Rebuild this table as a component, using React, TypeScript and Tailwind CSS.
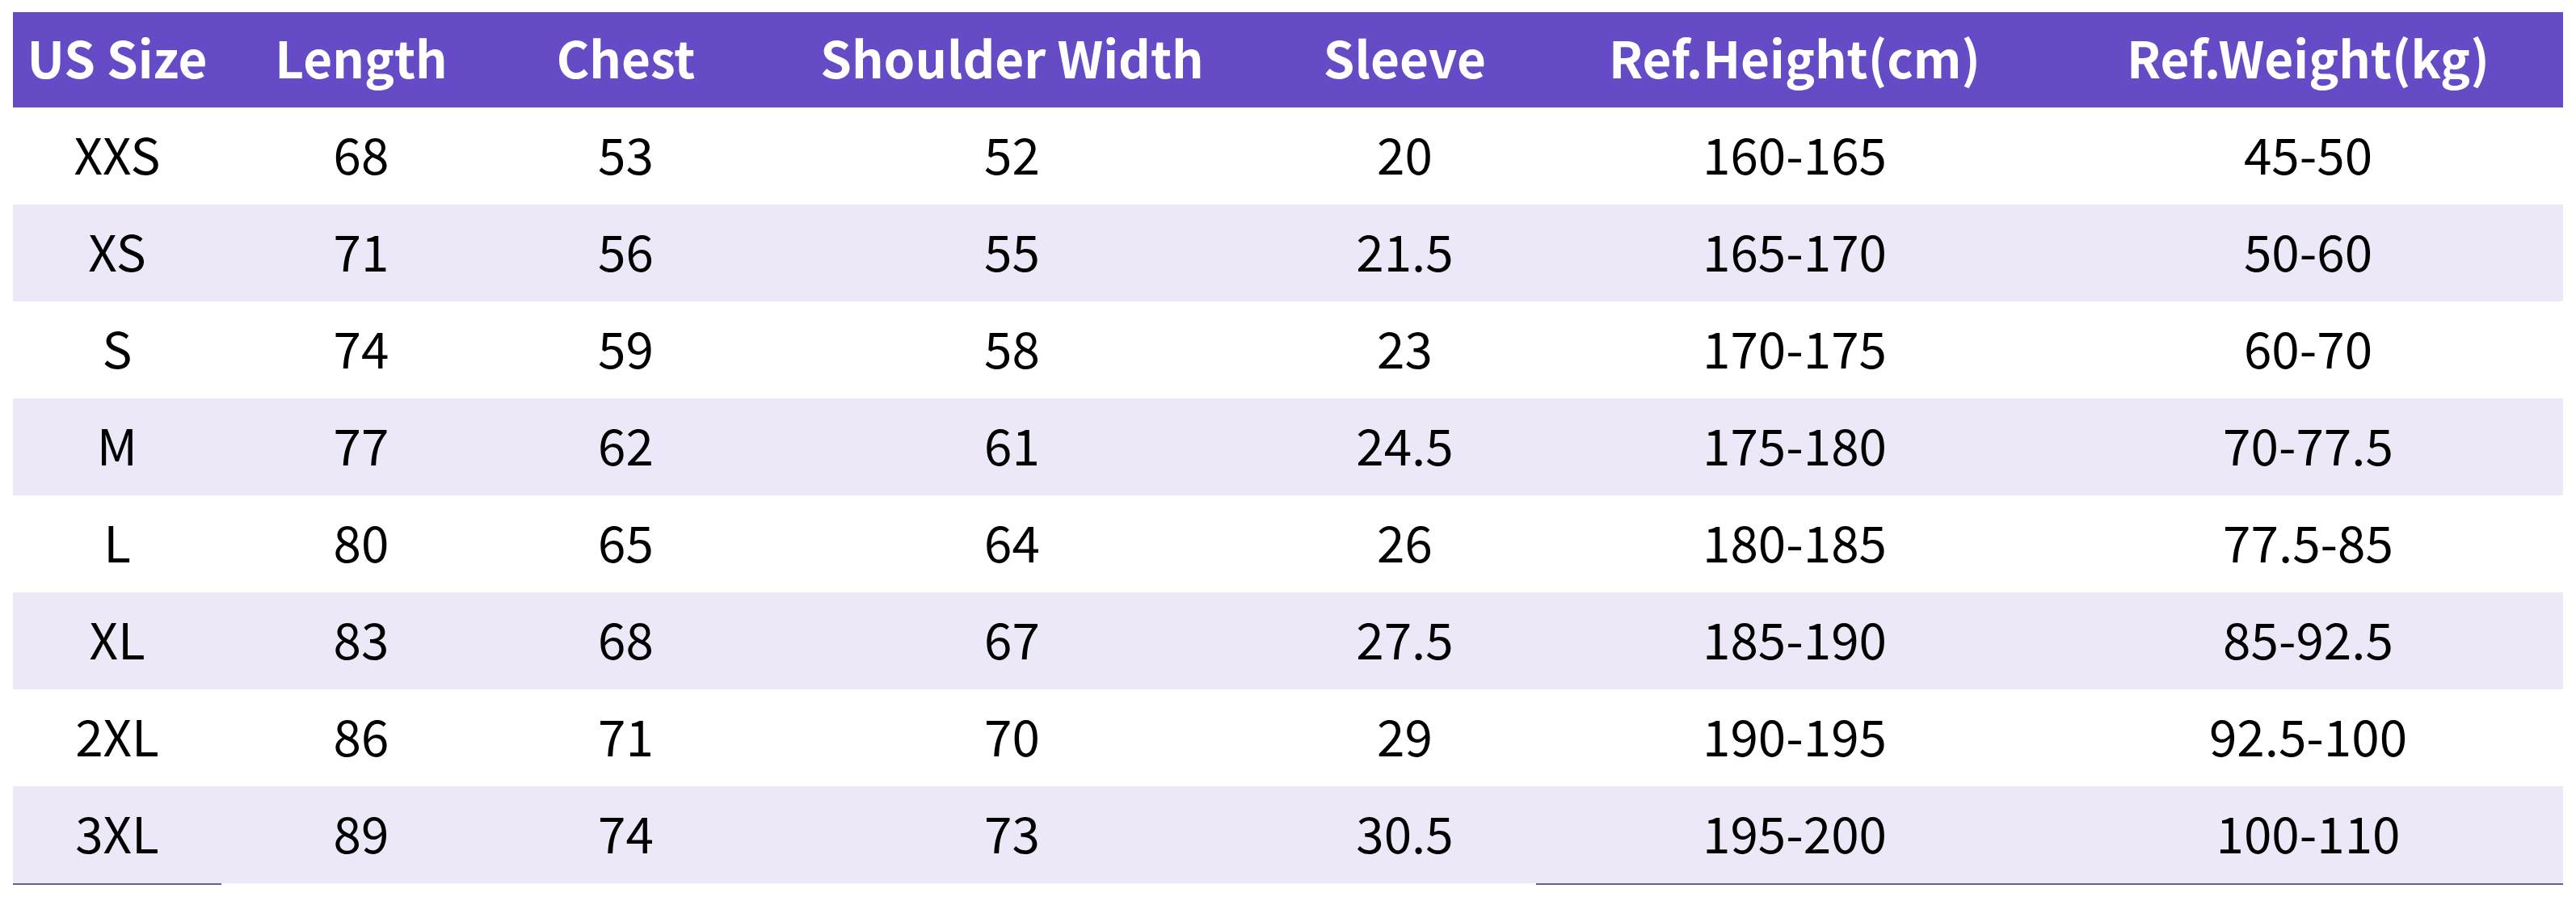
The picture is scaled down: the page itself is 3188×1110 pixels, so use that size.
const headers = ['US Size', 'Length', 'Chest', 'Shoulder Width', 'Sleeve', 'Ref.Height(cm)', 'Ref.Weight(kg)'];

const rows = [
  ['XXS', '68', '53', '52', '20', '160-165', '45-50'],
  ['XS', '71', '56', '55', '21.5', '165-170', '50-60'],
  ['S', '74', '59', '58', '23', '170-175', '60-70'],
  ['M', '77', '62', '61', '24.5', '175-180', '70-77.5'],
  ['L', '80', '65', '64', '26', '180-185', '77.5-85'],
  ['XL', '83', '68', '67', '27.5', '185-190', '85-92.5'],
  ['2XL', '86', '71', '70', '29', '190-195', '92.5-100'],
  ['3XL', '89', '74', '73', '30.5', '195-200', '100-110'],
];

// columns that carry the underline on the last row
const underlined = [0, 5, 6];

export default function App() {
  return (
    <div
      className="min-h-screen w-full bg-white px-[16px] pt-[15px]"
      style={{ fontFamily: '"Noto Sans CJK SC", "Noto Sans", sans-serif' }}
    >
      <div className="grid grid-cols-[258px_346px_309px_647px_325px_640px_631px]">
        {headers.map((h) => (
          <div
            key={h}
            className="flex h-[118px] items-center justify-center bg-[#664bc7] pb-[8px] text-[62px] font-bold leading-none text-white"
          >
            {h}
          </div>
        ))}

        {rows.map((row, i) => {
          const last = i === rows.length - 1;
          const bg = i % 2 === 0 ? 'bg-white' : 'bg-[#ece8f8]';
          return row.map((cell, j) => (
            <div
              key={`${i}-${j}`}
              className={`flex items-center justify-center pb-[8px] text-[62px] leading-none text-black ${bg} ${
                last
                  ? underlined.includes(j)
                    ? 'h-[122px] border-b-2 border-[#6a5c9c]'
                    : 'h-[122px] border-b-2 border-transparent bg-clip-padding'
                  : 'h-[120px]'
              }`}
            >
              {cell}
            </div>
          ));
        })}
      </div>
    </div>
  );
}
